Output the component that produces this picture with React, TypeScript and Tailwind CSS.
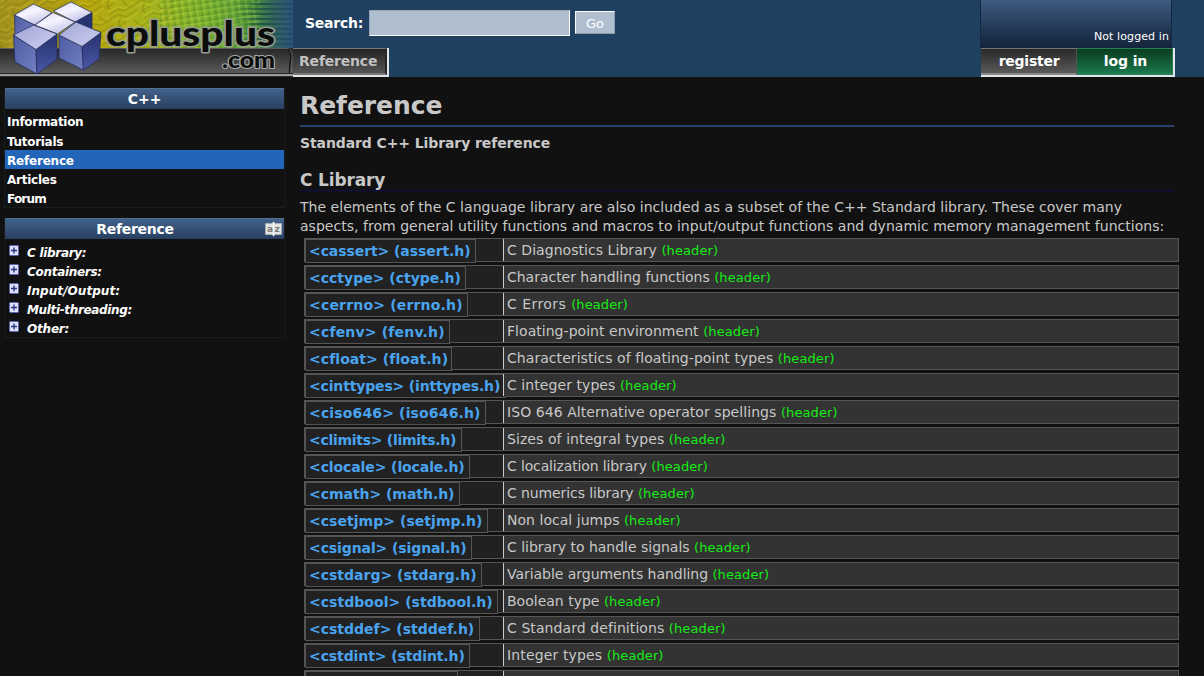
import React from "react";

type Entry = { link: string; desc: string; w: string; d?: string };

const entries: Entry[] = [
  { link: "<cassert> (assert.h)", desc: "C Diagnostics Library", w: "w-[171px] tracking-[-0.08px]", d: "tracking-[0.05px]" },
  { link: "<cctype> (ctype.h)", desc: "Character handling functions", w: "w-[161px]", d: "tracking-[-0.02px]" },
  { link: "<cerrno> (errno.h)", desc: "C Errors", w: "w-[163px] tracking-[0.18px]", d: "tracking-[0.45px]" },
  { link: "<cfenv> (fenv.h)", desc: "Floating-point environment", w: "w-[145px] tracking-[0.18px]", d: "tracking-[0.04px]" },
  { link: "<cfloat> (float.h)", desc: "Characteristics of floating-point types", w: "w-[147px] tracking-[0.06px]", d: "tracking-[0.06px]" },
  { link: "<cinttypes> (inttypes.h)", desc: "C integer types", w: "w-[201px] tracking-[-0.16px]", d: "tracking-[0.07px]" },
  { link: "<ciso646> (iso646.h)", desc: "ISO 646 Alternative operator spellings", w: "w-[181px] tracking-[0.15px]", d: "tracking-[0.06px]" },
  { link: "<climits> (limits.h)", desc: "Sizes of integral types", w: "w-[157px] tracking-[-0.28px]", d: "tracking-[0.08px]" },
  { link: "<clocale> (locale.h)", desc: "C localization library", w: "w-[165px] tracking-[-0.1px]", d: "tracking-[-0.14px]" },
  { link: "<cmath> (math.h)", desc: "C numerics library", w: "w-[155px] tracking-[-0.04px]", d: "tracking-[-0.1px]" },
  { link: "<csetjmp> (setjmp.h)", desc: "Non local jumps", w: "w-[183px] tracking-[0.04px]", d: "tracking-[0.03px]" },
  { link: "<csignal> (signal.h)", desc: "C library to handle signals", w: "w-[167px] tracking-[-0.1px]", d: "tracking-[-0.02px]" },
  { link: "<cstdarg> (stdarg.h)", desc: "Variable arguments handling", w: "w-[177px]", d: "tracking-[-0.04px]" },
  { link: "<cstdbool> (stdbool.h)", desc: "Boolean type", w: "w-[193px] tracking-[0.04px]" },
  { link: "<cstddef> (stddef.h)", desc: "C Standard definitions", w: "w-[175px]", d: "tracking-[0.08px]" },
  { link: "<cstdint> (stdint.h)", desc: "Integer types", w: "w-[165px] tracking-[-0.1px]", d: "tracking-[0.14px]" },
  { link: "", desc: "", w: "w-[153px]" },
];

function Logo() {
  return (
    <svg width="293" height="77" viewBox="0 0 293 77" className="block shrink-0">
      <defs>
        <linearGradient id="board" x1="0" x2="1">
          <stop offset="0" stopColor="#a39120" />
          <stop offset=".3" stopColor="#b8a60f" />
          <stop offset=".5" stopColor="#a5b41c" />
          <stop offset=".7" stopColor="#7cae2c" />
          <stop offset=".85" stopColor="#559a3c" />
          <stop offset=".93" stopColor="#33665a" />
          <stop offset="1" stopColor="#2d527c" />
        </linearGradient>
        <linearGradient id="bar" x1="0" x2="0" y1="0" y2="1">
          <stop offset="0" stopColor="#262626" />
          <stop offset="1" stopColor="#5a5a5a" />
        </linearGradient>
        <linearGradient id="top" x1=".2" x2=".8" y1="0" y2="1">
          <stop offset="0" stopColor="#dcdcf6" />
          <stop offset=".4" stopColor="#f6f4ff" />
          <stop offset="1" stopColor="#b9bce4" />
        </linearGradient>
        <linearGradient id="topFront" x1="0" x2="1" y1="0" y2="1">
          <stop offset="0" stopColor="#9ea3d4" />
          <stop offset="1" stopColor="#cfd1f2" />
        </linearGradient>
        <linearGradient id="front" x1="0" x2="1" y1="0" y2="1">
          <stop offset="0" stopColor="#4c5a9f" />
          <stop offset="1" stopColor="#7580c4" />
        </linearGradient>
        <linearGradient id="side" x1="0" x2="0" y1="0" y2="1">
          <stop offset="0" stopColor="#26316f" />
          <stop offset="1" stopColor="#4b58a5" />
        </linearGradient>
        <linearGradient id="fade" x1="235" x2="290" y1="0" y2="0" gradientUnits="userSpaceOnUse">
          <stop offset="0" stopColor="#245a3c" stopOpacity="0" />
          <stop offset=".5" stopColor="#1f5740" />
          <stop offset="1" stopColor="#244a70" />
        </linearGradient>
        <pattern id="traces" width="28" height="22" patternUnits="userSpaceOnUse" patternTransform="rotate(-32)">
          <path d="M0 4H11L16 9H28M0 9H8L14 15H28M4 22V17L9 13M20 0V5L24 9M0 19H12" fill="none" stroke="#7b7806" strokeWidth="1.2" opacity=".55" />
          <path d="M0 2H12L17 7H28M0 12H6L13 18H28" fill="none" stroke="#dcd02b" strokeWidth="1" opacity=".5" />
        </pattern>
        <pattern id="grid" width="7" height="6" patternUnits="userSpaceOnUse" patternTransform="rotate(-8)">
          <path d="M0 1H7M2 0V6" stroke="#397a1c" strokeWidth="1" opacity=".5" />
          <path d="M0 3H7M5 0V6" stroke="#c6ea55" strokeWidth="1" opacity=".4" />
        </pattern>
      </defs>
      <rect width="293" height="49" fill="url(#board)" />
      <rect width="175" height="49" fill="url(#traces)" />
      <rect x="160" width="100" height="49" fill="url(#grid)" />
      <g fill="url(#fade)">
        <rect x="235" y="3" width="58" height="2" />
        <rect x="235" y="8" width="58" height="2" />
        <rect x="235" y="13" width="58" height="2" />
        <rect x="235" y="18" width="58" height="2" />
        <rect x="235" y="23" width="58" height="2" />
        <rect x="235" y="28" width="58" height="2" />
        <rect x="235" y="33" width="58" height="2" />
        <rect x="235" y="38" width="58" height="2" />
        <rect x="235" y="43" width="58" height="2" />
      </g>
      <rect y="48" width="293" height="25" fill="url(#bar)" />
      <path d="M0 48.5H289" stroke="#5c5c5c" />
      <path d="M0 73.5H293" stroke="#222" />
      <path d="M0 75H293" stroke="#9a9da0" strokeWidth="2" />
      <path d="M0 76.5H293" stroke="#2a2c2e" />
      <path d="M288 49Q291.500 53 290.500 60T289.500 73" fill="none" stroke="#151515" strokeWidth="1.4" />
      <path d="M289.500 49Q293 53 292 60T291 73" fill="none" stroke="#777" strokeWidth=".6" />
      <g stroke="#20285c" strokeWidth=".7" strokeLinejoin="round">
        <path d="M75 22L92 12.500V30L78 26Z" fill="#27336f" />
        <path d="M53.500 11L71 2L92 12.500L75 22Z" fill="url(#top)" />
        <path d="M14.500 15L35 25V30L15 38Z" fill="url(#front)" />
        <path d="M14.500 15L33.500 4L52 12.500L35 25Z" fill="url(#top)" />
        <path d="M35 25L53 12.500L75 22L57.500 34Z" fill="url(#top)" />
        <path d="M13.500 35L36 49.500L37 74L15 62Z" fill="url(#front)" />
        <path d="M36 49.500L57 34V59L37 74Z" fill="url(#side)" />
        <path d="M13.500 35L33.500 25L57 34L36 49.500Z" fill="url(#topFront)" />
        <path d="M59 35L82 46.500L83.500 70L59 58Z" fill="url(#front)" />
        <path d="M82 46.500L101 32.500L99 59L83.500 70Z" fill="url(#side)" />
        <path d="M59 35L76 22L101 32.500L82 46.500Z" fill="url(#topFront)" />
      </g>
      <g fontFamily="Lato, sans-serif" fontWeight="900" paintOrder="stroke" strokeLinejoin="round">
        <text x="106" y="45.500" fontSize="35" textLength="169" lengthAdjust="spacingAndGlyphs" fill="#0b0d0b" stroke="#989d92" strokeWidth="3">cplusplus</text>
        <text x="222" y="68" fontSize="22" textLength="53" lengthAdjust="spacingAndGlyphs" fill="#0b0d0b" stroke="#a5a5a5" strokeWidth="2.2">.com</text>
      </g>
    </svg>
  );
}

function PlusIcon() {
  return (
    <svg width="10" height="11" viewBox="0 0 10 11" className="mt-[3px] block shrink-0">
      <rect x=".5" y=".5" width="9" height="10" rx="1" fill="#dde1fa" stroke="#5b67b3" />
      <path d="M2 5.500H8M5 2.500V8.500" stroke="#28367e" strokeWidth="1.4" />
    </svg>
  );
}

function BookIcon() {
  return (
    <svg width="17" height="16" viewBox="0 0 17 16" className="block">
      <path d="M.5 2.500H7L8.500.8L10 2.500H16.500V13.500H10L8.500 15.200L7 13.500H.5Z" fill="#e3e3e1" stroke="#b9bcc0" strokeWidth=".6" />
      <path d="M8.500 1V15" stroke="#fff" strokeWidth="1" />
      <text x="2" y="11" fontSize="9" fontWeight="bold" fill="#777" fontFamily="DejaVu Sans, sans-serif">a</text>
      <text x="9.500" y="11" fontSize="9" fontWeight="bold" fill="#777" fontFamily="DejaVu Sans, sans-serif">z</text>
    </svg>
  );
}

const nav = [
  { t: "Information", c: "h-[21px] pt-[2px] tracking-[-0.3px]" },
  { t: "Tutorials", c: "h-[18px] pt-px tracking-[-0.3px]" },
  { t: "Reference", c: "h-[19px] bg-[#2365b9] pt-[2px] tracking-[-0.2px]" },
  { t: "Articles", c: "h-[19px] pt-[2px] tracking-[-0.25px]" },
  { t: "Forum", c: "h-[19px] pt-[2px] tracking-[-0.8px]" },
];
const tree = [
  { t: "C library:", c: "tracking-[-0.3px]" },
  { t: "Containers:", c: "tracking-[-0.3px]" },
  { t: "Input/Output:", c: "tracking-[0.05px]" },
  { t: "Multi-threading:", c: "tracking-[-0.35px]" },
  { t: "Other:", c: "tracking-[-0.2px]" },
];

const panelHead =
  "flex h-[21px] items-center border-t border-[#4f6f93] bg-linear-to-b from-[#42628a] to-[#293f61] text-[14px] font-bold text-white";

export default function App() {
  return (
    <div className="h-[676px] w-[1204px] overflow-hidden bg-[#111111] font-['DejaVu_Sans',sans-serif] whitespace-nowrap text-[#c8c8c8]">
      <header className="flex h-[77px] bg-[#1f4060]">
        <Logo />
        <div className="flex flex-1 flex-col">
          <div className="flex h-[48px] pt-[10px] pl-[12px]">
            <span className="w-[64px] pt-px text-[14px] leading-[24px] font-bold tracking-[-0.25px] text-white">Search:</span>
            <input
              aria-label="Search"
              className="h-[26px] w-[201px] border border-t-[#9aa5b0] border-r-white border-b-white border-l-[#9aa5b0] bg-[#b0bfd0] outline-none"
            />
            <button className="mt-px ml-[5px] h-[23px] w-[40px] border border-t-white border-r-[#929ca7] border-b-[#929ca7] border-l-white bg-[#b0bfd0] pt-[2px] text-[13px] leading-[20px] text-white">
              Go
            </button>
          </div>
          <div className="h-[29px] w-[96px] border-r-2 border-b-2 border-[#dfe5ea]">
            <div className="h-[27px] border-t border-r-2 border-b-2 border-t-[#777] border-r-[#252525] border-b-[#777] bg-linear-to-b from-[#242424] to-[#555] pl-[6px] text-[14px] leading-[25px] font-bold tracking-[-0.2px] text-[#c0c0c0]">
              Reference
            </div>
          </div>
        </div>
        <div className="mr-[29px] flex w-[195px] flex-col">
          <div className="mr-[3px] flex h-[48px] items-end justify-end border-r border-l border-[#102942] bg-linear-to-b from-[#3e5a82] to-[#13243a] pr-[2px] pb-[3px] text-[11px] leading-[16px] tracking-[0.1px] text-white">
            Not logged in
          </div>
          <div className="ml-px flex h-[29px] border-r-2 border-b-2 border-[#dfe5ea] text-[14px] leading-[25px] font-bold text-white">
            <div className="h-[27px] w-[96px] border-t border-r border-b-2 border-t-[#777] border-r-[#555] border-b-[#888] bg-linear-to-b from-[#292929] to-[#5a5a5a] pl-px text-center tracking-[-0.25px]">
              register
            </div>
            <div className="h-[27px] flex-1 border-t border-r border-b-2 border-[#278054] bg-linear-to-b from-[#093d20] to-[#1b774d] pl-[2px] text-center tracking-[-0.1px]">
              log in
            </div>
          </div>
        </div>
      </header>

      <div className="flex">
        <aside className="w-[300px] pt-[11px] pl-[4px]">
          <section className="h-[120px] w-[281px] border border-t-0 border-[#191d1f]">
            <h2 className={panelHead + " justify-center"}>C++</h2>
            <nav className="pt-[2px] text-[12px] leading-[19px] font-bold text-white">
              {nav.map((n) => (
                <a key={n.t} className={"block pl-[2px] " + n.c}>
                  {n.t}
                </a>
              ))}
            </nav>
          </section>
          <section className="mt-[10px] h-[120px] w-[281px] border border-t-0 border-[#191d1f]">
            <h2 className={panelHead}>
              <span className="flex-1 text-center tracking-[-0.3px]">Reference</span>
              <span className="mr-[2px]">
                <BookIcon />
              </span>
            </h2>
            <ul className="pt-[3px] text-[12px] leading-[19px] font-bold text-white italic">
              {tree.map((n) => (
                <li key={n.t} className="flex h-[19px] gap-[8px] pl-[4px]">
                  <PlusIcon />
                  <span className={"pt-[2px] " + n.c}>{n.t}</span>
                </li>
              ))}
            </ul>
          </section>
        </aside>

        <main className="w-[880px] pt-[11px]">
          <h1 className="h-[39px] w-[874px] border-b-2 border-[#28416f] text-[25px] leading-[36px] font-bold tracking-[-0.05px]">Reference</h1>
          <p className="mt-[6px] text-[14px] leading-[20px] font-bold tracking-[-0.1px]">Standard C++ Library reference</p>
          <h2 className="mt-[16px] h-[22px] w-[874px] border-b border-[#100a50] text-[17px] leading-[22px] font-bold tracking-[-0.15px]">C Library</h2>
          <p className="mt-[7px] text-[14px] leading-[19px] tracking-[0.025px]">
            The elements of the C language library are also included as a subset of the C++ Standard library. These cover many
            <br />
            aspects, from general utility functions and macros to input/output functions and dynamic memory management functions:
          </p>
          <dl className="mt-[2px] ml-[4px] flex w-[875px] flex-col gap-[3px]">
            {entries.map((e, i) => (
              <div key={i} className="flex h-[24px] shrink-0 border border-[#555]">
                <dt className="w-[198px] shrink-0 bg-[#212121]">
                  <a className={"block h-[24px] border border-[#555] bg-[#212121] pl-[3px] text-[14px] leading-[23px] font-bold text-[#4aa3ee] " + e.w}>
                    {e.link}
                  </a>
                </dt>
                <dd className="flex-1 border-l border-[#ccc] bg-[#333] pl-[3px] text-[14px] leading-[22px]">
                  {e.desc && (
                    <>
                      <span className={e.d}>{e.desc} </span>
                      <span className="text-[13px] tracking-[0.1px] text-[#14ec14]">(header)</span>
                    </>
                  )}
                </dd>
              </div>
            ))}
          </dl>
        </main>
      </div>
    </div>
  );
}
